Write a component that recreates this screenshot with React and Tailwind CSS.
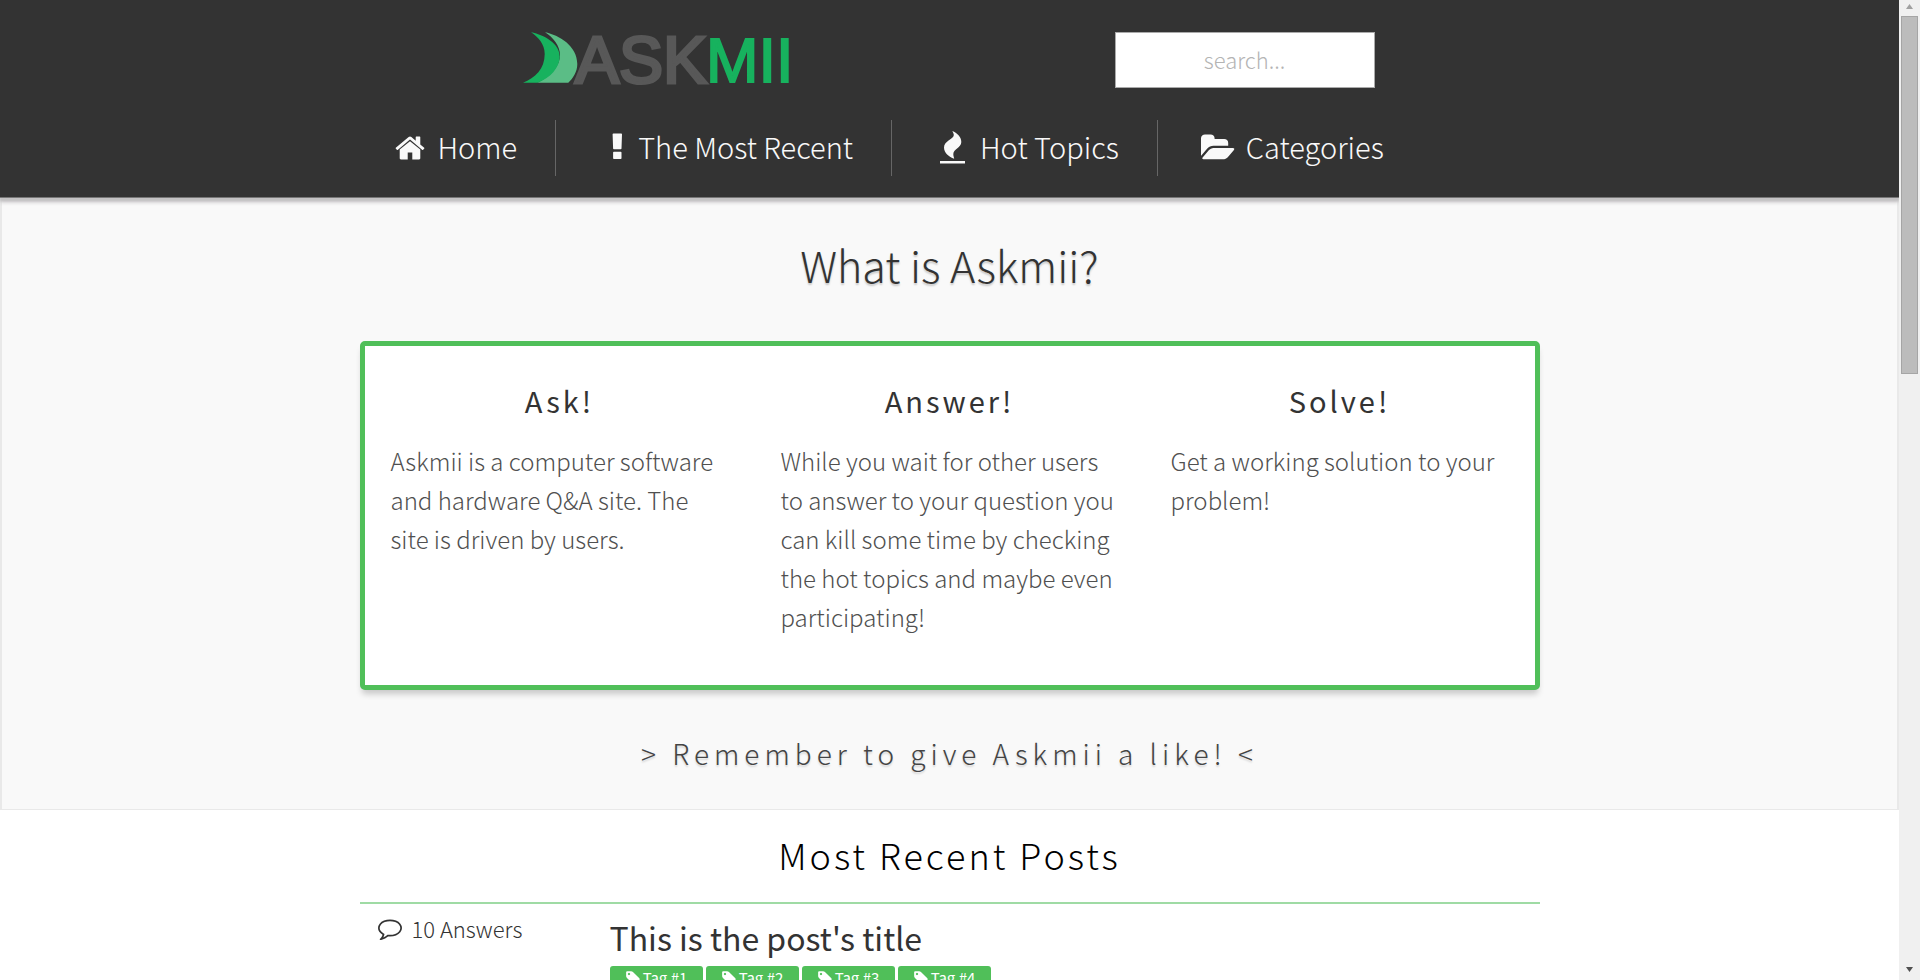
const FONT = "font-['Noto_Sans_CJK_SC','Noto_Sans',sans-serif]";

function HomeIcon() {
  return (
    <span className="flex w-10 justify-center">
      <svg viewBox="0 0 1792 1792" className="h-8 w-8 fill-current" aria-hidden="true">
        <path d="M1472 992v480q0 26-19 45t-45 19h-384v-384h-256v384h-384q-26 0-45-19t-19-45v-480q0-1 .5-3t.5-3l575-474 575 474q1 2 1 6zm223-69l-62 74q-8 9-21 11h-3q-13 0-21-7l-692-577-692 577q-12 8-24 7-13-2-21-11l-62-74q-8-10-7-23.5t11-21.5l719-599q32-26 76-26t76 26l244 204v-195q0-14 9-23t23-9h192q14 0 23 9t9 23v408l219 182q10 8 11 21.5t-7 23.5z" />
      </svg>
    </span>
  );
}

function ExclamationIcon() {
  return (
    <svg viewBox="0 0 34 32" className="h-8 w-[34px] fill-current" aria-hidden="true">
      <path d="M17.400 1.500h7.800q.8 0 .8.8l-.5 14.200q0 .8-.8.8h-6.800q-.8 0-.8-.8l-.5-14.200q0-.8.8-.8zM17.900 19.800h6.800q.8 0 .8.8v5.600q0 .8-.8.8h-6.800q-.8 0-.8-.8v-5.600q0-.8.8-.8z" />
    </svg>
  );
}

function FlameIcon() {
  return (
    <svg viewBox="-4 0 40 36" className="h-9 w-10 fill-current" aria-hidden="true">
      <path d="M16.300 1C21 3 25.300 6.800 25.300 12 25.300 17.500 17.500 19 17.300 24c0 1.800 .6 3 .9 4.700C13 27 8 23 8 17.500 8 11 17.800 9 17.800 5 17.800 3.500 17 2.200 16.300 1z" />
      <path d="M4 31h25v2.500H4z" />
    </svg>
  );
}

function FolderIcon() {
  return (
    <span className="flex w-10 justify-center">
      <svg viewBox="0 0 1920 1792" className="h-8 w-[34px] fill-current" aria-hidden="true">
        <path d="M1879 952q0 31-31 66l-336 396q-43 51-120.500 86.500t-143.500 35.500h-1088q-34 0-60.500-13t-26.500-43q0-31 31-66l336-396q43-51 120.500-86.500t143.500-35.500h1088q34 0 60.500 13t26.500 43zm-343-344v160h-832q-94 0-197 47.500t-164 119.500l-337 396-5 6q0-4-.5-12.500t-.5-12.500v-960q0-92 66-158t158-66h320q92 0 158 66t66 158v32h544q92 0 158 66t66 158z" />
      </svg>
    </span>
  );
}

function CommentIcon() {
  return (
    <svg viewBox="0 0 1792 1792" className="h-6 w-6 fill-current" aria-hidden="true">
      <path d="M896 384q-204 0-381.500 69.500t-282 187.500-104.500 255q0 112 71.500 213.500t201.500 175.500l87 50-27 96q-24 91-70 172 152-63 275-171l43-38 57 6q69 8 130 8 204 0 381.500-69.500t282-187.500 104.500-255-104.500-255-282-187.500-381.500-69.500zm896 512q0 174-120 321.500t-326 233-450 85.500q-70 0-145-8-198 175-460 242-49 14-114 22h-5q-15 0-27-10.500t-16-27.500v-1q-3-4-.5-12t2-10 4.500-9.500l6-9 7-8.500 8-9q7-8 31-34.500t34.500-38 31-39.500 32.500-51 27-59 26-76q-157-89-247.500-220t-90.500-281q0-174 120-321.500t326-233 450-85.500 450 85.500 326 233 120 321.500z" />
    </svg>
  );
}

function TagIcon() {
  return (
    <svg viewBox="0 0 1792 1792" className="h-4 w-4 fill-current" aria-hidden="true">
      <path d="M576 448q0-53-37.500-90.500t-90.500-37.500-90.500 37.500-37.500 90.500 37.500 90.500 90.500 37.500 90.500-37.500 37.500-90.500zm1067 576q0 53-37 90l-491 492q-39 37-91 37-53 0-90-37l-715-716q-38-37-64.500-101t-26.500-117v-416q0-52 38-90t90-38h416q53 0 117 26.500t102 64.500l715 714q37 39 37 91z" />
    </svg>
  );
}

function Logo() {
  return (
    <svg viewBox="0 -16 272 88" className="-my-4 h-[88px] w-[272px]" role="img" aria-label="Askmii">
      <path d="M22 .3C36 3 54.300 14 54.300 32c0 8-4.500 14.500-9 18.700H14.500C28 44 37 34 37 23 37 14 30 5 22 .3z" fill="#5bbd86" />
      <path d="M8 .3C22 3 36.700 12 36.700 24.500 36.700 36 27 46 14.500 50.700H0C12 46 21.700 37 21.700 22 21.700 12 15 5 8 .3z" fill="#17b25e" />
      <g className="font-['Liberation_Sans',sans-serif]">
        <text x="52" y="51" fontSize="66" fill="#585858" stroke="#585858" strokeWidth="3.200">ASK</text>
        <text x="183" y="50" fontSize="63" fill="#17b25e" stroke="#17b25e" strokeWidth="2">MII</text>
      </g>
    </svg>
  );
}

const NAV = [
  { label: "Home", Icon: HomeIcon },
  { label: "The Most Recent", Icon: ExclamationIcon },
  { label: "Hot Topics", Icon: FlameIcon },
  { label: "Categories", Icon: FolderIcon },
];

const STEPS = [
  { title: "Ask!", text: "Askmii is a computer software and hardware Q&A site. The site is driven by users." },
  {
    title: "Answer!",
    text: "While you wait for other users to answer to your question you can kill some time by checking the hot topics and maybe even participating!",
  },
  { title: "Solve!", text: "Get a working solution to your problem!" },
];

const TAGS = ["Tag #1", "Tag #2", "Tag #3", "Tag #4"];

function Header() {
  return (
    <header className="relative z-10 bg-[#333333] pt-8 pb-[21px] text-[#f9f9f9] shadow-[0_1px_0_#777777,0_4px_2px_#c4c2c4,0_5px_4px_#c4c2c4]">
      <div className="mx-auto flex w-full max-w-[1180px] items-center justify-between pr-[165px] pl-[163px]">
        <a href="#home">
          <Logo />
        </a>
        <input
          type="text"
          aria-label="Search"
          placeholder="search..."
          className="h-14 w-[260px] border border-[#aaaaaa] bg-white pb-[2px] text-center text-[22px] font-light text-[#333333] placeholder:text-[#b4b4b4]"
        />
      </div>
      <nav className="mx-auto mt-8 w-full max-w-[1180px] pl-[30px]">
        <ul className="flex">
          {NAV.map(({ label, Icon }, i) => (
            <li key={label} className={i < NAV.length - 1 ? "border-r border-[#666666] pr-[38px]" : ""}>
              <a href="#" className={i > 0 ? "flex h-14 items-center gap-2 pl-10" : "flex h-14 items-center gap-2"}>
                <Icon />
                <span className="pb-[2px] text-[29px] font-light whitespace-nowrap">{label}</span>
              </a>
            </li>
          ))}
        </ul>
      </nav>
    </header>
  );
}

function Intro() {
  return (
    <section className="border-x-2 border-b border-[#e9e9e9] bg-[#f9f9f9] pt-9 pb-8 text-center text-[#333333]">
      <h1 className="text-[43px] leading-[62px] font-light text-shadow-[0_2px_2px_rgba(0,0,0,0.2)]">What is Askmii?</h1>
      <div className="mx-auto mt-[46px] grid min-h-[349px] w-full max-w-[1180px] grid-cols-3 rounded-[5px] border-[5px] border-[#50bf59] bg-white pt-8 pb-9 shadow-[0_6px_6px_-2px_rgba(0,0,0,0.2)]">
        {STEPS.map((step) => (
          <article key={step.title} className="px-[26px]">
            <h2 className="text-[29px] leading-[44px] tracking-[3px]">{step.title}</h2>
            <p className="mt-[19px] text-left text-[24px] leading-[39px] font-light text-[#505050]">{step.text}</p>
          </article>
        ))}
      </div>
      <p className="mt-10 text-[28px] leading-[47px] font-light tracking-[5px] text-[#444444] text-shadow-[0_2px_2px_rgba(0,0,0,0.15)]">
        &gt; Remember to give Askmii a like! &lt;
      </p>
    </section>
  );
}

function RecentPosts() {
  return (
    <section className="mx-auto w-full max-w-[1180px] pt-4">
      <h2 className="border-b-2 border-[#9fdba4] pb-5 text-center text-[36px] leading-[56px] font-light tracking-[3px] text-black">
        Most Recent Posts
      </h2>
      <article className="flex text-[#333333]">
        <p className="flex w-[250px] items-center gap-[10px] self-start pt-2 pl-[18px] text-[22px] leading-8 font-light">
          <CommentIcon />
          <span>10 Answers</span>
        </p>
        <div className="pt-2">
          <h3 className="text-[32px] leading-[50px]">This is the post's title</h3>
          <ul className="mt-1 flex gap-[3px]">
            {TAGS.map((tag) => (
              <li key={tag}>
                <a href="#" className="flex h-6 w-[93px] items-center justify-center gap-[2px] rounded-[3px] bg-[#50bf59] text-[15px] text-white">
                  <TagIcon />
                  {tag}
                </a>
              </li>
            ))}
          </ul>
        </div>
      </article>
    </section>
  );
}

function ScrollTrack() {
  return (
    <div className="flex w-[21px] flex-none flex-col items-center bg-[#f0f0f0]" aria-hidden="true">
      <svg viewBox="0 0 7 5" className="my-[4px] h-[5px] w-[7px] fill-[#a0a0a0]">
        <path d="M3.500 0L7 5H0z" />
      </svg>
      <div className="mt-[3px] h-[358px] w-[17px] border border-[#a5a5a5] bg-[#bcbcbc]" />
      <svg viewBox="0 0 7 5" className="mt-auto mb-2 h-[5px] w-[7px] fill-[#505050]">
        <path d="M0 0h7L3.500 5z" />
      </svg>
    </div>
  );
}

export default function App() {
  return (
    <div className={`flex h-screen overflow-hidden bg-white ${FONT}`}>
      <main className="min-w-0 flex-1 overflow-hidden">
        <Header />
        <Intro />
        <RecentPosts />
      </main>
      <ScrollTrack />
    </div>
  );
}
